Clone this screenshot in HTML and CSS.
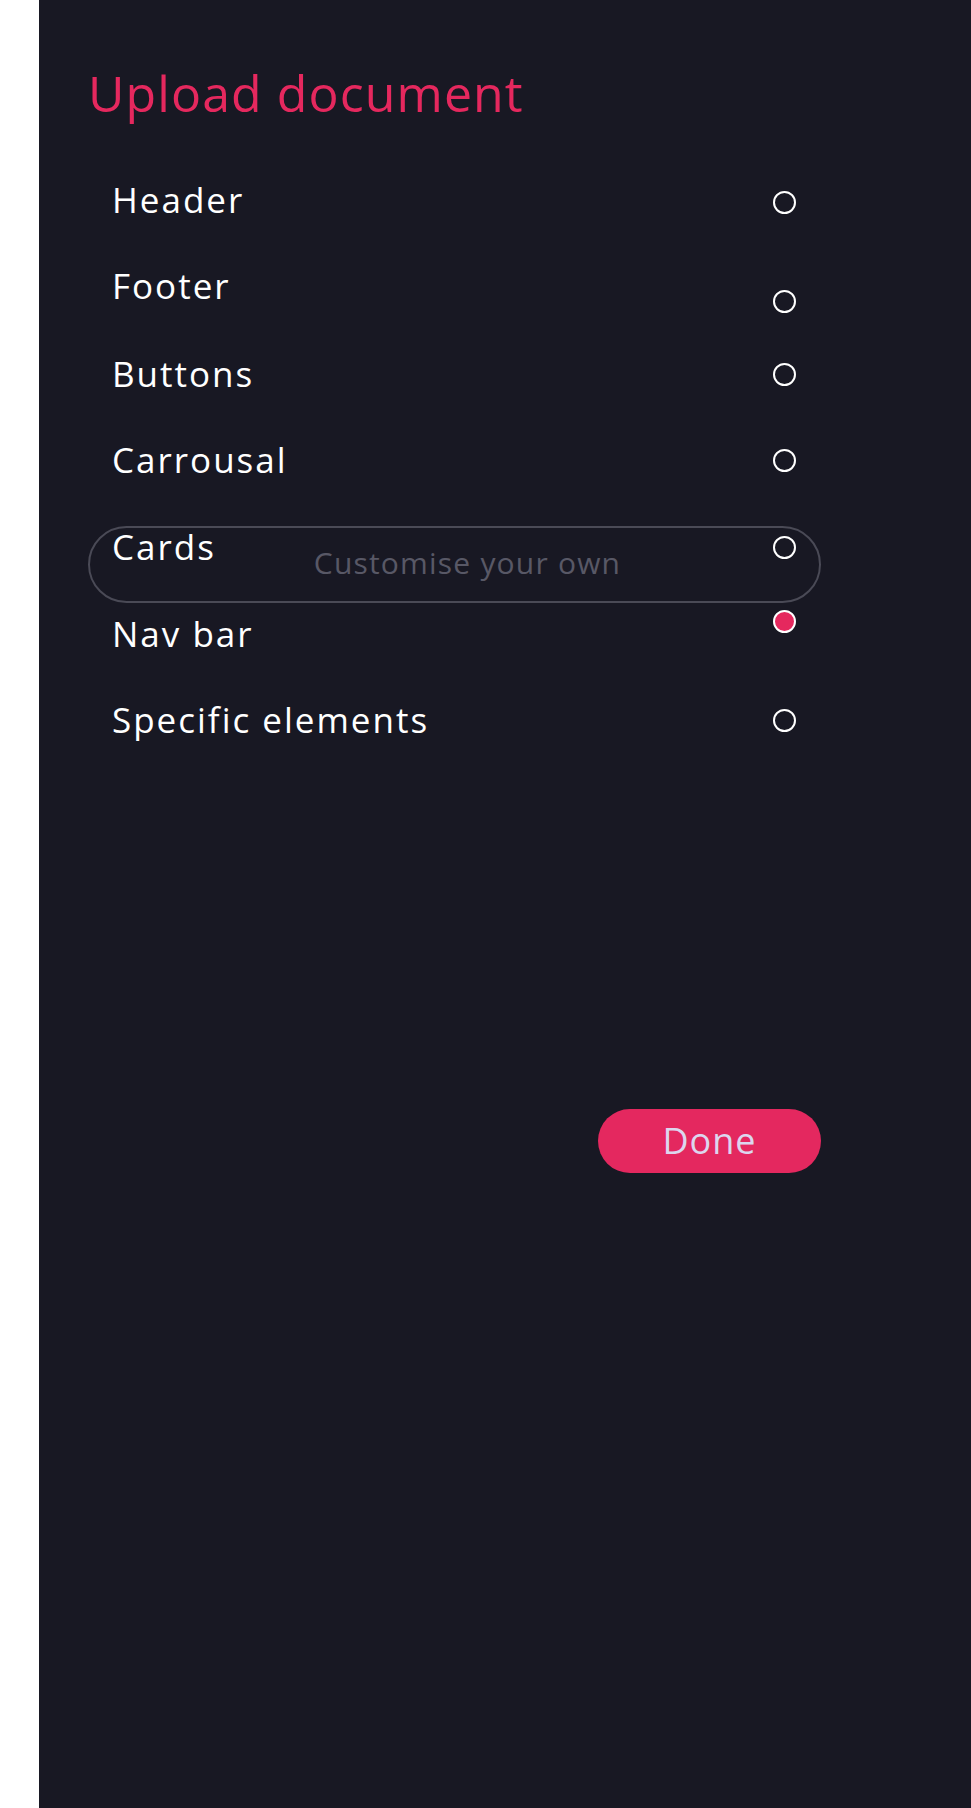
FILE: index.html
```html
<!DOCTYPE html>
<html lang="en">
<head>
<meta charset="utf-8">
<title>Upload document</title>
<link rel="stylesheet" href="styles.css">
</head>
<body>
<main class="panel">
  <h1 class="title">Upload document</h1>
  <div class="content">
    <ul class="options">
      <li class="option"><span class="label">Header</span><span class="radio"></span></li>
      <li class="option"><span class="label label-up">Footer</span><span class="radio radio-low"></span></li>
      <li class="option"><span class="label">Buttons</span><span class="radio"></span></li>
      <li class="option"><span class="label">Carrousal</span><span class="radio"></span></li>
      <li class="option"><span class="label">Cards</span><span class="radio"></span></li>
      <li class="option"><span class="label">Nav bar</span><span class="radio radio-high radio-checked"></span></li>
      <li class="option"><span class="label">Specific elements</span><span class="radio"></span></li>
    </ul>
    <div class="custom">Customise your own</div>
    <div class="actions">
      <button class="done" type="button">Done</button>
    </div>
  </div>
</main>
</body>
</html>
```
FILE: styles.css
```css
html, body {
  margin: 0;
  padding: 0;
}

body {
  background: #ffffff;
  font-family: "Open Sans", "Noto Sans", sans-serif;
}

.panel {
  margin-left: 39px;
  min-height: 1808px;
  background: #181823;
  padding: 63px 150px 0 49px;
  box-sizing: border-box;
}

.title {
  margin: 0;
  font-weight: 400;
  font-size: 50px;
  line-height: 60px;
  letter-spacing: 1.1px;
  color: #e5285e;
}

.content {
  position: relative;
  width: 733px;
  margin-top: 34px;
}

.options {
  list-style: none;
  margin: 0;
  padding: 0 25px 0 24px;
}

.option {
  height: 86.7px;
  display: flex;
  align-items: center;
  justify-content: space-between;
}

.option:nth-child(n+3) .radio {
  margin-top: 1px;
}

.label {
  font-size: 35px;
  line-height: 40px;
  color: #ffffff;
  letter-spacing: 2px;
}

.label-up {
  margin-bottom: 2px;
}

.radio {
  width: 23px;
  height: 23px;
  box-sizing: border-box;
  border: 2px solid #ffffff;
  border-radius: 50%;
  margin-top: 5px;
}

.option .radio-low {
  margin-top: 29px;
}

.option .radio-high {
  margin-top: 0;
  margin-bottom: 26px;
}

.radio-checked {
  background: #e5285e;
}

.custom {
  position: absolute;
  left: 0;
  top: 369px;
  width: 733px;
  height: 77px;
  box-sizing: border-box;
  border: 2px solid #4a4a56;
  border-radius: 40px;
  display: flex;
  align-items: center;
  justify-content: center;
  padding: 0 0 5px 26px;
  font-size: 30px;
  letter-spacing: 1.2px;
  color: #585866;
}

.actions {
  display: flex;
  justify-content: flex-end;
  margin-top: 345px;
}

.done {
  width: 223px;
  height: 64px;
  border: none;
  border-radius: 32px;
  background: #e4285f;
  color: #dcd6ee;
  font-family: "Open Sans", "Noto Sans", sans-serif;
  font-size: 36px;
  line-height: 64px;
  letter-spacing: 1px;
  padding: 0;
}
```
